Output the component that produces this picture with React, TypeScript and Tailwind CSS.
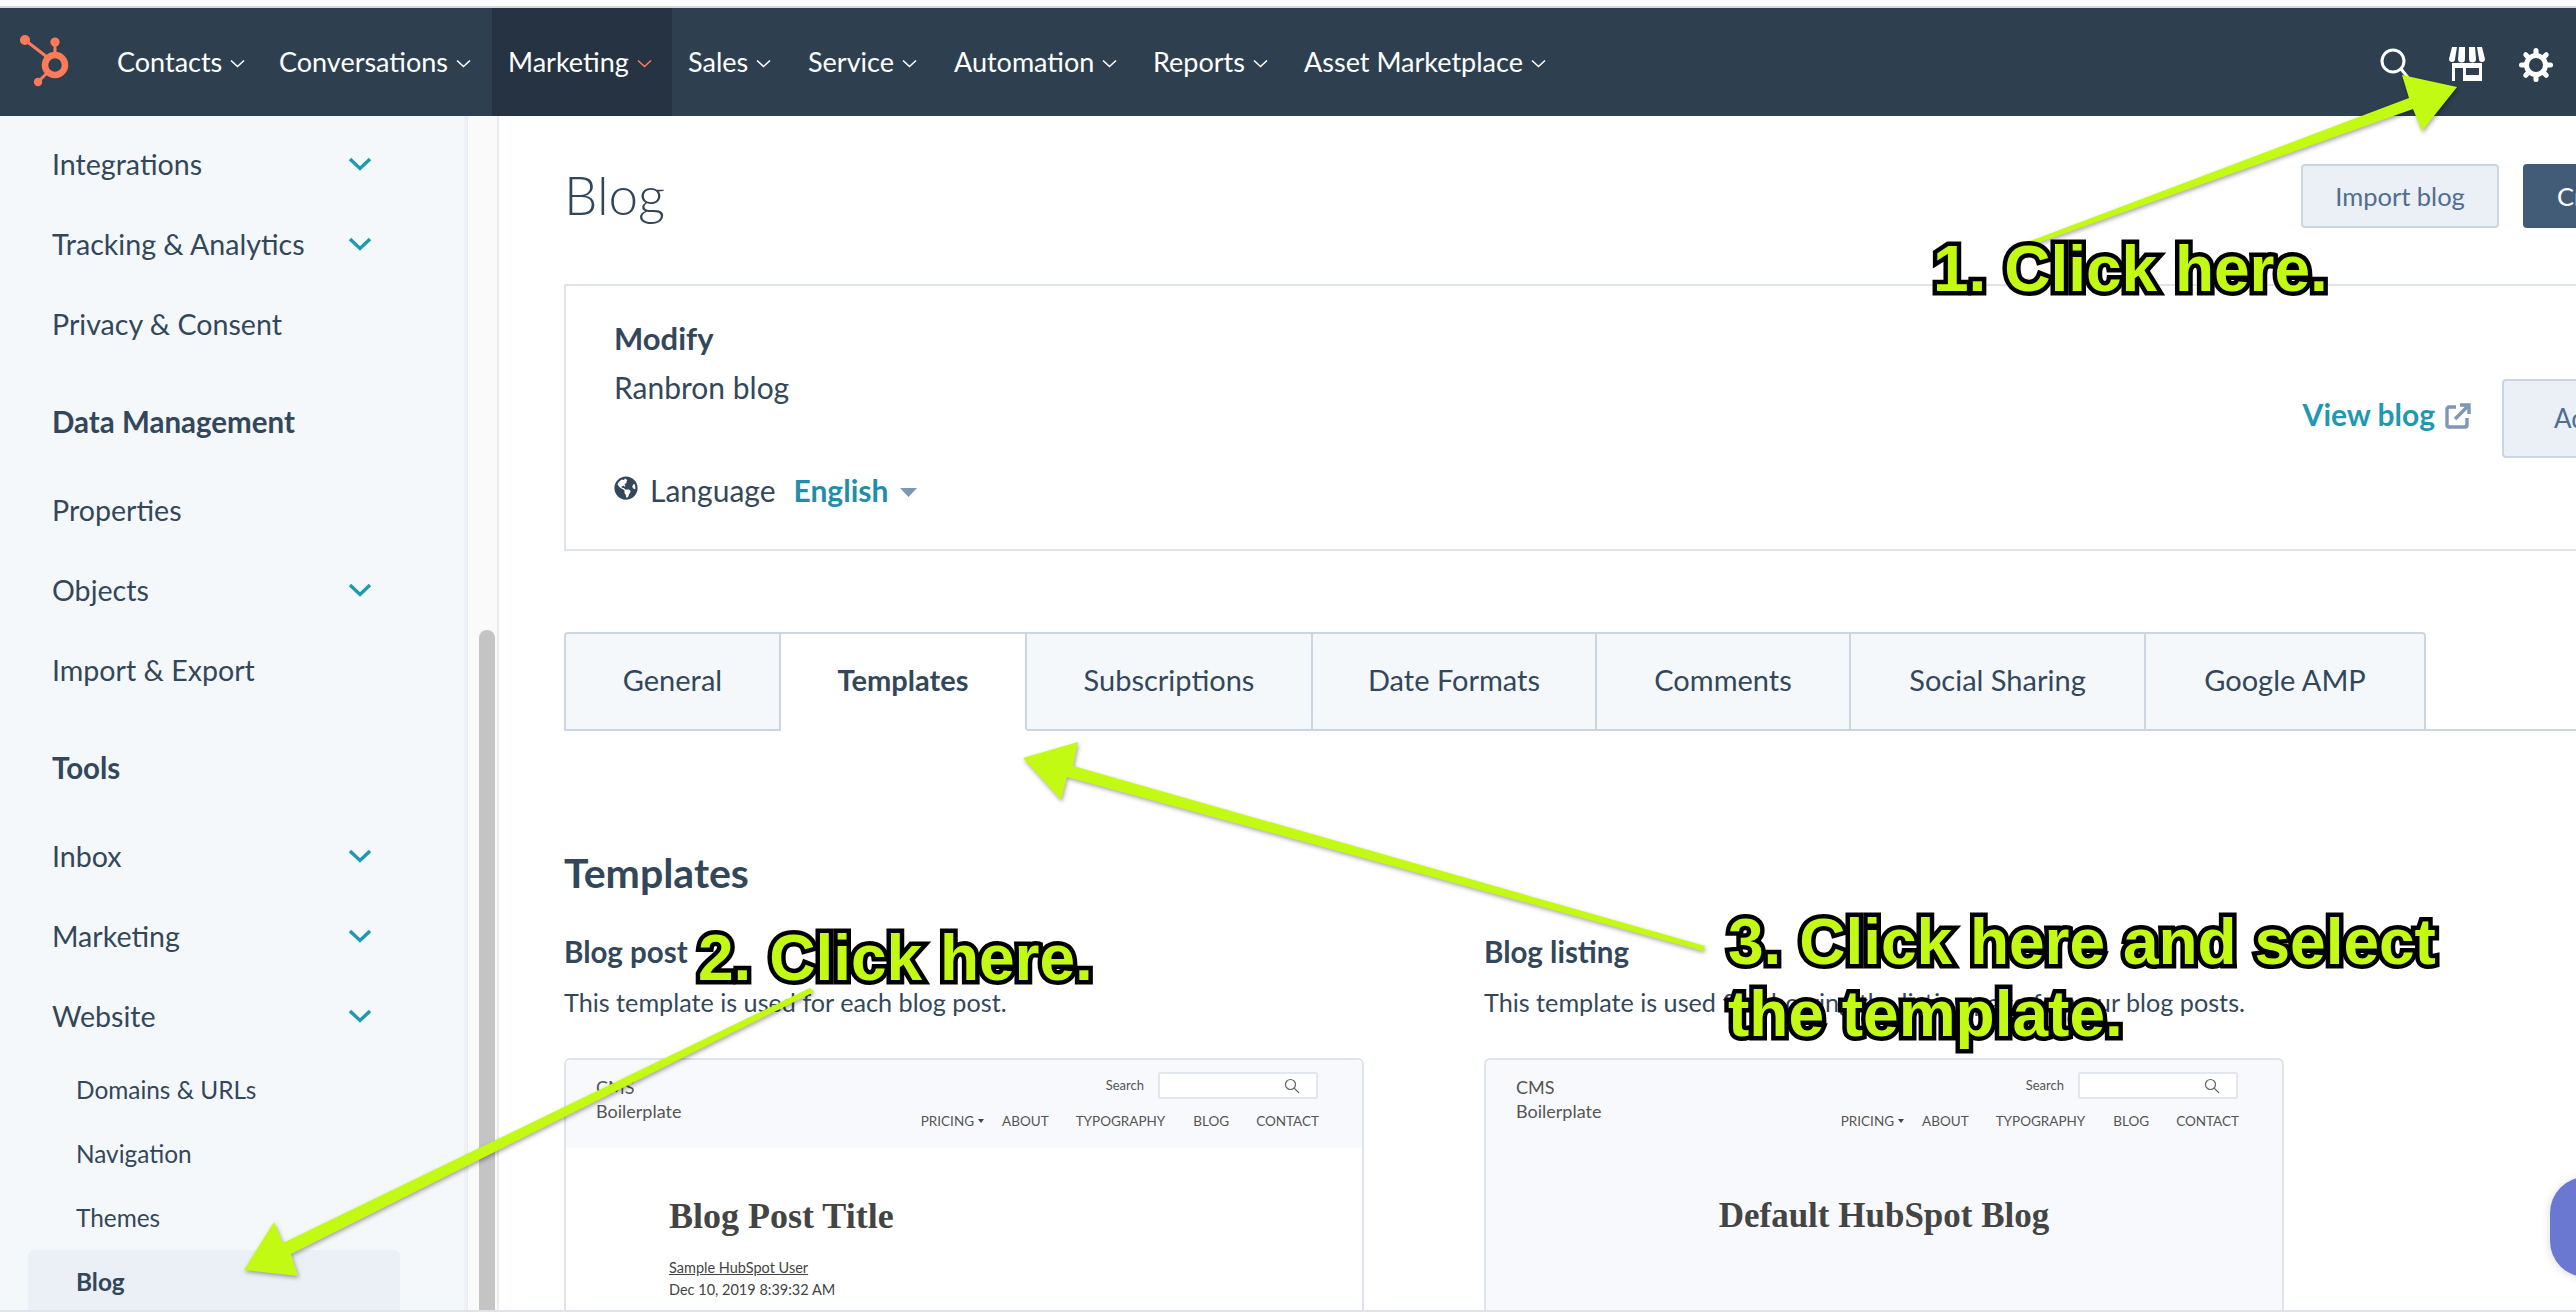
import React from "react";
import { FaGlobeAmericas } from "react-icons/fa";

const sans = "font-['Lato','Liberation_Sans',sans-serif]";
const serif = "font-['Liberation_Serif',serif]";
const label =
  "absolute whitespace-nowrap font-['Liberation_Sans',Arial,sans-serif] font-bold text-[64px] leading-[72px] text-[#c3fa14] [-webkit-text-stroke:9px_#000] [paint-order:stroke_fill]";

function Chevron({ active }: { active?: boolean }) {
  return (
    <svg width="15" height="9" viewBox="0 0 15 9" fill="none" className="ml-[8px] mt-[3px] shrink-0">
      <path d="M1 1.5 7.5 7.5 14 1.5" stroke={active ? "#ff7a59" : "#ffffff"} strokeWidth="1.6" />
    </svg>
  );
}

function NavItem({ text, cls, active }: { text: string; cls: string; active?: boolean }) {
  return (
    <div className={`flex h-full items-center text-[27px] text-white ${cls}`}>
      {text}
      <Chevron active={active} />
    </div>
  );
}

function Logo() {
  return (
    <svg width="60" height="70" viewBox="15 30 60 70" className="ml-[15px] shrink-0" fill="none">
      <circle cx="55" cy="68" r="10" stroke="#ff7a59" strokeWidth="6.5" />
      <circle cx="55" cy="45" r="4.6" fill="#ff7a59" />
      <circle cx="25" cy="43" r="5" fill="#ff7a59" />
      <circle cx="38" cy="85" r="4.2" fill="#ff7a59" />
      <path d="M55 45V60M25 43 47 60M38 85 47 76" stroke="#ff7a59" strokeWidth="3" />
    </svg>
  );
}

function Gear() {
  const teeth = [0, 45, 90, 135, 180, 225, 270, 315];
  return (
    <svg width="34" height="34" viewBox="0 0 34 34" fill="none">
      <circle cx="17" cy="17" r="9.5" stroke="#fff" strokeWidth="5" />
      {teeth.map((a) => (
        <path key={a} d="M17 2.5V6" stroke="#fff" strokeWidth="5" strokeLinecap="round" transform={`rotate(${a} 17 17)`} />
      ))}
    </svg>
  );
}

function Store() {
  return (
    <svg width="36" height="34" viewBox="0 0 36 34" fill="#fff" fillRule="evenodd">
      <path d="M3 0h5L6 12a3 3 0 0 1-6 0zM10 0h6v12a3.3 3.3 0 0 1-7 0zM20 0h6l1 12a3.3 3.3 0 0 1-7 0zM28 0h5l3 12a3 3 0 0 1-6 0z" />
      <path d="M3 16h30v18H3zM6 21v13h8V21zM17 21v7h13v-7z" />
    </svg>
  );
}

function Down() {
  return (
    <svg width="24" height="14" viewBox="0 0 24 14" fill="none" className="shrink-0">
      <path d="M2 2l10 9.5L22 2" stroke="#1f98b2" strokeWidth="3.4" />
    </svg>
  );
}

function Row({ text, arrow }: { text: string; arrow?: boolean }) {
  return (
    <div className="flex h-[80px] items-center justify-between pl-[52px] pr-[92px] text-[28.6px]">
      <span>{text}</span>
      {arrow && <Down />}
    </div>
  );
}

function Sub({ text, active }: { text: string; active?: boolean }) {
  return (
    <div
      className={`ml-[28px] flex h-[64px] w-[372px] items-center rounded-t-[6px] pl-[48px] text-[24.4px] ${
        active ? "bg-[#eaf0f6] font-bold" : ""
      }`}
    >
      {text}
    </div>
  );
}

function Sidebar() {
  return (
    <aside className="flex h-full w-[499px] shrink-0">
      <div className="h-full w-[467px] shrink-0 overflow-hidden border-r-[3px] border-[#eef2f6] bg-[#f5f8fa] pt-[8px] text-[#33475b]">
        <Row text="Integrations" arrow />
        <Row text="Tracking & Analytics" arrow />
        <Row text="Privacy & Consent" />
        <div className="mt-[28px] flex h-[60px] items-center pl-[52px] text-[29.5px] font-bold">Data Management</div>
        <div className="mt-[18px]" />
        <Row text="Properties" />
        <Row text="Objects" arrow />
        <Row text="Import & Export" />
        <div className="mt-[28px] flex h-[60px] items-center pl-[52px] text-[29.5px] font-bold">Tools</div>
        <div className="mt-[18px]" />
        <Row text="Inbox" arrow />
        <Row text="Marketing" arrow />
        <Row text="Website" arrow />
        <div className="mt-[2px]" />
        <Sub text="Domains & URLs" />
        <Sub text="Navigation" />
        <Sub text="Themes" />
        <Sub text="Blog" active />
      </div>
      <div className="flex h-full flex-1 flex-col items-center justify-end border-l border-r-2 border-[#e8edf2] bg-[#fafafa] pl-[8px]">
        <div className="h-[680px] w-[16px] rounded-t-[8px] bg-[#c4c4c4]" />
      </div>
    </aside>
  );
}

function PreviewHeader() {
  return (
    <div className="relative flex h-[88px] justify-between px-[30px] pt-[12px] text-[#555]">
      <div className="pt-[3px] text-[18px] leading-[24px]">
        <div>CMS</div>
        <div>Boilerplate</div>
      </div>
      <div className="flex flex-col items-end pr-[14px]">
        <div className="flex items-center gap-[14px] text-[13px] leading-none">
          <span>Search</span>
          <div className="flex h-[27px] w-[160px] items-center justify-end rounded-[2px] border-2 border-[#e3e6ec] bg-white pr-[16px]">
            <svg width="16" height="16" viewBox="0 0 16 16" fill="none" stroke="#666" strokeWidth="1.2">
              <circle cx="6.5" cy="6.5" r="5" />
              <path d="M10.2 10.2 15 15" />
            </svg>
          </div>
        </div>
        <div className="mr-[-1px] mt-[14px] flex items-center text-[13.5px] leading-[16px]">
          <span>PRICING</span>
          <svg width="6" height="4" viewBox="0 0 6 4" className="ml-[4px]" fill="#444"><path d="M0 0h6L3 4z" /></svg>
          <span className="ml-[18px]">ABOUT</span>
          <span className="ml-[27px]">TYPOGRAPHY</span>
          <span className="ml-[28px]">BLOG</span>
          <span className="ml-[27px]">CONTACT</span>
        </div>
      </div>
    </div>
  );
}

const tabs: { t: string; w: string; on?: boolean }[] = [
  { t: "General", w: "w-[217px] rounded-tl-[4px] border-l-2" },
  { t: "Templates", w: "w-[246px]", on: true },
  { t: "Subscriptions", w: "w-[286px]" },
  { t: "Date Formats", w: "w-[284px]" },
  { t: "Comments", w: "w-[254px]" },
  { t: "Social Sharing", w: "w-[295px]" },
  { t: "Google AMP", w: "w-[280px] rounded-tr-[4px]" },
];

function Main() {
  return (
    <main className="h-full flex-1 overflow-hidden bg-white pl-[65px] text-[#33475b]">
      <div className="w-[2100px]">
        <div className="flex items-start justify-between pt-[48px]">
          <h1 className="mt-[1px] text-[53px] font-light leading-[60px]">Blog</h1>
          <div className="mr-[24px] flex gap-[24px] text-[25.5px]">
            <div className="flex h-[64px] w-[198px] items-center justify-center rounded-[4px] border-2 border-[#cbd6e2] bg-[#eaf0f6] text-[#506e91]">
              Import blog
            </div>
            <div className="flex h-[64px] w-[117px] items-center justify-start overflow-hidden whitespace-nowrap rounded-[4px] bg-[#425b76] pl-[34px] text-white">
              Create blog
            </div>
          </div>
        </div>
        <section className="mt-[56px] flex h-[267px] justify-between border-2 border-[#dfe3eb] pl-[48px]">
          <div>
            <div className="mt-[34px] text-[31px] font-bold leading-[36px]">Modify</div>
            <div className="mt-[13px] text-[30px] leading-[36px]">Ranbron blog</div>
            <div className="mt-[67px] flex items-center text-[30px] leading-[36px]">
              <FaGlobeAmericas className="mb-[4px] h-[24px] w-[24px]" />
              <span className="ml-[12px]">Language</span>
              <span className="ml-[18px] font-bold text-[#1f8fa8]">English</span>
              <svg width="17" height="9" viewBox="0 0 17 9" className="ml-[12px] mt-[4px]" fill="#7c98b6"><path d="M0 0h17L8.5 9z" /></svg>
            </div>
          </div>
          <div className="mt-[93px] flex h-[79px] items-center">
            <span className="mb-[8px] text-[30px] font-bold text-[#1f98b2]">View blog</span>
            <svg width="26" height="26" viewBox="0 0 26 26" fill="none" stroke="#7c98b6" strokeWidth="3.4" className="mb-[6px] ml-[10px]">
              <path d="M11 4H4a2 2 0 0 0-2 2v16a2 2 0 0 0 2 2h16a2 2 0 0 0 2-2v-7" />
              <path d="M10 16 23 3M15 2h9v9" />
            </svg>
            <div className="ml-[31px] flex h-[79px] w-[160px] items-center rounded-[4px] border-2 border-[#cbd6e2] bg-[#eaf0f6] pl-[50px] text-[26px] text-[#506e91]">
              Add
            </div>
          </div>
        </section>
        <nav className="mt-[81px] flex h-[99px] border-b-2 border-[#cbd6e2] text-[29px]">
          {tabs.map((t) => (
            <div
              key={t.t}
              className={`flex h-[99px] items-center justify-center border-t-2 border-r-2 border-b-2 border-[#cbd6e2] pb-[3px] ${t.w} ${
                t.on ? "border-b-white bg-white font-bold" : "bg-[#f5f8fa]"
              }`}
            >
              {t.t}
            </div>
          ))}
        </nav>
        <h2 className="mt-[118px] text-[41px] font-bold leading-[48px]">Templates</h2>
        <div className="mt-[37px] grid w-[1720px] grid-cols-[800px_800px] gap-x-[120px]">
          <div>
            <div className="text-[29.5px] font-bold leading-[36px]">Blog post</div>
            <div className="mt-[14px] text-[25.2px] leading-[36px]">This template is used for each blog post.</div>
            <div className="mt-[38px] h-[400px] rounded-t-[6px] border-2 border-[#dfe3eb]">
              <div className="rounded-t-[6px] bg-[#f8f9fc]">
                <PreviewHeader />
              </div>
              <div className="pl-[103px] pt-[45px] text-[#444]">
                <div className={`${serif} text-[36px] font-bold leading-[46px]`}>Blog Post Title</div>
                <div className="mt-[19px] text-[14.5px] leading-[20px] underline">Sample HubSpot User</div>
                <div className="mt-[2px] text-[14.5px] leading-[20px]">Dec 10, 2019 8:39:32 AM</div>
              </div>
            </div>
          </div>
          <div>
            <div className="text-[29.5px] font-bold leading-[36px]">Blog listing</div>
            <div className="mt-[14px] text-[25.2px] leading-[36px]">This template is used for showing the listing page for your blog posts.</div>
            <div className="mt-[38px] h-[400px] rounded-t-[6px] border-2 border-[#dfe3eb] bg-[#f8f9fc]">
              <PreviewHeader />
              <div className={`${serif} pt-[45px] text-center text-[35px] font-bold leading-[46px] text-[#444]`}>Default HubSpot Blog</div>
            </div>
          </div>
        </div>
      </div>
    </main>
  );
}

export default function App() {
  return (
    <div className={`relative flex h-[1312px] w-[2576px] flex-col overflow-hidden bg-white ${sans}`}>
      <div className="h-[6px] shrink-0 bg-white" />
      <div className="h-[2px] shrink-0 bg-[#d5d8dc]" />
      <header className="flex h-[108px] shrink-0 items-center bg-[#2e3f50]">
        <Logo />
        <div className="flex h-full items-center pl-[42px]">
          <NavItem text="Contacts" cls="w-[162px]" />
          <NavItem text="Conversations" cls="w-[213px]" />
          <div className="flex h-full w-[180px] items-center bg-[#253342] pl-[16px]">
            <NavItem text="Marketing" cls="" active />
          </div>
          <NavItem text="Sales" cls="ml-[16px] w-[120px]" />
          <NavItem text="Service" cls="w-[146px]" />
          <NavItem text="Automation" cls="w-[199px]" />
          <NavItem text="Reports" cls="w-[151px]" />
          <NavItem text="Asset Marketplace" cls="w-[260px]" />
        </div>
        <div className="ml-auto flex items-center pr-[23px]">
          <svg width="34" height="36" viewBox="0 0 34 36" fill="none" stroke="#fff" strokeWidth="3" className="mt-[7px]">
            <circle cx="14" cy="13" r="11" />
            <path d="M22 21l9 11" />
          </svg>
          <div className="ml-[36px] mt-[4px]"><Store /></div>
          <div className="ml-[34px] mt-[6px]"><Gear /></div>
        </div>
      </header>
      <div className="flex h-[1194px] shrink-0">
        <Sidebar />
        <Main />
      </div>
      <div className="h-[2px] shrink-0 bg-[#dfe3eb]" />

      <div className="absolute left-[2550px] top-[1177px] h-[100px] w-[100px] rounded-[36px] bg-[#6a78d1] shadow-[0_1px_10px_rgba(0,0,0,0.15)]" />

      <svg
        className="pointer-events-none absolute left-0 top-0 drop-shadow-[1px_2px_2px_rgba(0,0,0,0.35)]"
        width="2576"
        height="1312"
        viewBox="0 0 2576 1312"
        fill="#c3fa14"
      >
        <polygon points="2025,243 2409,98 2402,75 2457,87 2422,131 2413,109 2032,245" />
        <polygon points="1023,758 1078,742 1073,766 1705,946 1703,951 1067,777 1061,800" />
        <polygon points="244,1270 274,1222 283,1243 810,988 814,992 291,1254 298,1276" />
      </svg>

      <div className={`${label} left-[1933px] top-[233px]`}>1. Click here.</div>
      <div className={`${label} left-[698px] top-[922px]`}>2. Click here.</div>
      <div className={`${label} left-[1728px] top-[906px]`}>
        3. Click here and select
        <br />
        the template.
      </div>
    </div>
  );
}
